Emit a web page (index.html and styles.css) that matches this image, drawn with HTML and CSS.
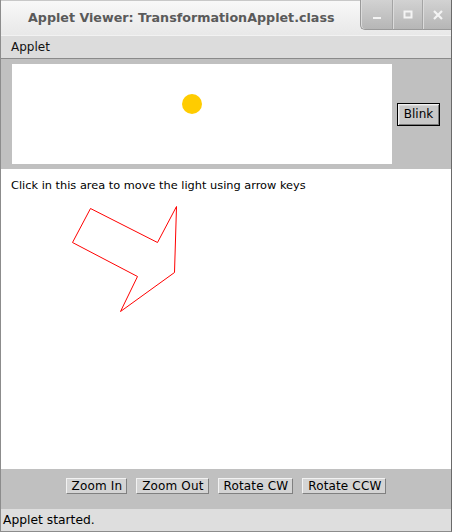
FILE: index.html
```html
<!DOCTYPE html>
<html>
<head>
<meta charset="utf-8">
<link rel="stylesheet" href="styles.css">
</head>
<body>
<div class="window">
  <div class="titlebar">
    <div class="title">Applet Viewer: TransformationApplet.class</div>
    <div class="wbtns">
      <div class="wbtn first"><svg width="10" height="10" viewBox="0 0 10 10"><rect x="1" y="7" width="8" height="2" fill="#f4f4f4"/></svg></div>
      <div class="wbtn"><svg width="10" height="10" viewBox="0 0 10 10"><rect x="1.5" y="1.5" width="7" height="6" fill="none" stroke="#f4f4f4" stroke-width="2"/></svg></div>
      <div class="wbtn"><svg width="10" height="10" viewBox="0 0 10 10"><path d="M1 1 L9 9 M9 1 L1 9" stroke="#f4f4f4" stroke-width="2.2"/></svg></div>
    </div>
  </div>
  <div class="menubar"><span class="menu">Applet</span></div>
  <div class="content">
    <div class="toppanel">
      <div class="lightbox">
        <svg class="sun" width="380" height="100" viewBox="0 0 380 100"><circle cx="180" cy="40" r="10" fill="#ffcc00"/></svg>
      </div>
      <div class="blinkwrap"><button class="blink">Blink</button></div>
    </div>
    <div class="drawarea">
      <div class="hint">Click in this area to move the light using arrow keys</div>
      <svg class="shape" width="450" height="300" viewBox="0 0 450 300">
        <polygon points="89.5,39.5 156.5,73.5 175.5,37.5 173.5,103.5 119.5,142.5 136.5,107.5 71.5,73.5" fill="none" stroke="#ff0000" stroke-width="1"/>
      </svg>
    </div>
    <div class="bottompanel">
      <button class="btn">Zoom In</button>
      <button class="btn">Zoom Out</button>
      <button class="btn">Rotate CW</button>
      <button class="btn">Rotate CCW</button>
    </div>
  </div>
  <div class="status">Applet started.</div>
</div>
</body>
</html>
```
FILE: styles.css
```css
html, body {
  margin: 0;
  padding: 0;
  background: #ffffff;
}
.window {
  width: 452px;
  height: 532px;
  box-sizing: border-box;
  display: flex;
  flex-direction: column;
  font-family: "DejaVu Sans", sans-serif;
  border-left: 1px solid #8c8c8c;
  border-right: 1px solid #6a6a6a;
  border-bottom: 1px solid #8c8c8c;
  overflow: hidden;
}
.titlebar {
  height: 35px;
  flex: none;
  display: flex;
  align-items: flex-start;
  background: linear-gradient(#f8f8f8, #e8e8e8);
  border-top: 1px solid #c8c8c8;
  box-sizing: border-box;
  margin-left: -1px;
  margin-right: -1px;
}
.title {
  flex: 1;
  padding-left: 28px;
  padding-top: 9px;
  font-size: 12.7px;
  font-weight: bold;
  color: #5a5a5a;
  white-space: nowrap;
}
.wbtns {
  display: flex;
  height: 30px;
  margin-top: -1px;
}
.wbtn {
  width: 30px;
  height: 30px;
  display: flex;
  align-items: center;
  justify-content: center;
  background: linear-gradient(#d2d2d2, #b6b6b6);
  border-left: 1px solid #a4a4a4;
  box-shadow: inset 1px 0 0 #dcdcdc;
  box-sizing: border-box;
  border-bottom: 1px solid #9a9a9a;
}
.wbtn.first {
  width: 32px;
  border-bottom-left-radius: 5px;
  border-left: 1px solid #9a9a9a;
}
.menubar {
  height: 24px;
  flex: none;
  background: #dcdcdc;
  border-top: 1px solid #f2f2f2;
  border-bottom: 1px solid #8a8a8a;
  box-sizing: border-box;
  display: flex;
  align-items: center;
  padding-left: 10px;
  font-size: 12px;
  color: #111111;
}
.content {
  flex: 1;
  display: flex;
  flex-direction: column;
}
.toppanel {
  height: 110px;
  flex: none;
  background: #c0c0c0;
  display: flex;
  padding: 5px 0 5px 11px;
  box-sizing: border-box;
}
.lightbox {
  width: 380px;
  height: 100px;
  background: #ffffff;
}
.sun {
  display: block;
}
.blinkwrap {
  flex: 1;
  display: flex;
  align-items: center;
  padding-left: 5px;
}
.blink {
  font-family: "DejaVu Sans", sans-serif;
  font-size: 12px;
  color: #000000;
  height: 23px;
  width: 43px;
  padding: 0;
  background: #c8c8c8;
  border: 1px solid #000000;
  box-shadow: inset 1px 1px 0 #f0f0f0, inset -1px -1px 0 #7a7a7a, inset 2px 2px 0 #d8d8d8;
}
.drawarea {
  flex: 1;
  position: relative;
  background: #ffffff;
}
.hint {
  padding: 9px 0 0 10px;
  font-size: 11.35px;
  color: #000000;
}
.shape {
  position: absolute;
  left: 0;
  top: 0;
}
.bottompanel {
  height: 40px;
  flex: none;
  background: #c0c0c0;
  display: flex;
  justify-content: center;
  align-items: flex-start;
  padding-top: 9px;
  gap: 9px;
  box-sizing: border-box;
}
.btn {
  font-family: "DejaVu Sans", sans-serif;
  font-size: 12px;
  color: #000000;
  height: 16px;
  padding: 0 4px 0 5px;
  margin: 0;
  line-height: 14px;
  letter-spacing: 0.15px;
  background: #d4d4d4;
  border: 1px solid;
  border-color: #f2f2f2 #808080 #808080 #f2f2f2;
}
.status {
  height: 22px;
  flex: none;
  background: #dedede;
  font-size: 12.3px;
  color: #000000;
  padding-left: 2px;
  display: flex;
  align-items: center;
}
```
